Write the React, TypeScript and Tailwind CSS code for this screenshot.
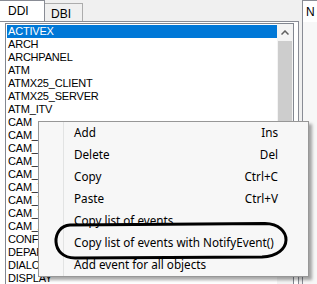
import React from 'react';

const items = [
  'ACTIVEX', 'ARCH', 'ARCHPANEL', 'ATM', 'ATMX25_CLIENT', 'ATMX25_SERVER', 'ATM_ITV', 'CAM',
  'CAM_DOME', 'CAM_DVR', 'CAM_IP', 'CAM_PTZ', 'CAM_TELEMETRY', 'CAM_VIDEO', 'CAM_VMD', 'CAM_ZONE',
  'CONFIG', 'DEPARTMENT', 'DIALOG', 'DISPLAY', 'DOOR',
];

const menu = [
  { label: 'Add', key: 'Ins' },
  { label: 'Delete', key: 'Del' },
  { label: 'Copy', key: 'Ctrl+C' },
  { label: 'Paste', key: 'Ctrl+V' },
  { label: 'Copy list of events', key: '' },
  { label: 'Copy list of events with NotifyEvent()', key: '' },
  { label: 'Add event for all objects', key: '' },
];

const App = () => {
  return (
    <div className="relative w-[317px] h-[284px] overflow-hidden bg-[#f0f0f0] flex font-['Liberation_Sans',Arial,sans-serif] text-black">
      {/* left tab control */}
      <div className="w-[299px] flex flex-col shrink-0">
        <div className="h-[22px] flex items-end">
          <div className="h-[22px] w-[45px] bg-white border-t border-r border-[#898c95] pl-[8px] pt-[3px] text-[12px] leading-[14px]">DDI</div>
          <div className="h-[19px] w-[38px] bg-[#f0f0f0] border-t border-r border-[#acacac] pl-[6px] pt-[3px] text-[12px] leading-[14px]">DBI</div>
        </div>
        <div className="flex-1 bg-white border-r border-[#898c95] pl-[5px] pt-[1px] border-t border-t-[#898c95] -mt-px">
          <div className="w-[289px] h-[270px] border border-[#828790] flex">
            <div className="flex-1 flex flex-col pt-px pl-px">
              {items.map((it, i) => (
                <div
                  key={it}
                  className={
                    'h-[13px] leading-[13px] pl-[1px] text-[11px] tracking-[-0.2px] whitespace-nowrap ' +
                    (i === 0 ? 'bg-[#0078d7] text-white' : '')
                  }
                >
                  {it}
                </div>
              ))}
            </div>
            <div className="w-[16px] bg-[#f4f4f4] flex flex-col">
              <div className="h-[17px] flex items-center justify-center">
                <svg width="8" height="5" viewBox="0 0 8 5">
                  <path d="M0.5 4.5 L4 1 L7.5 4.5" fill="none" stroke="#606060" strokeWidth="1.5" />
                </svg>
              </div>
              <div className="mx-px h-[110px] bg-[#cdcdcd]" />
            </div>
          </div>
        </div>
      </div>

      {/* right tab control, mostly off screen */}
      <div className="ml-[3px] flex-1 flex flex-col">
        <div className="h-[22px] bg-white border-l border-t border-[#898c95] pl-[3px] pt-[4px] text-[12px] leading-[14px]">N</div>
        <div className="flex-1 bg-[#f7f7f7] border-l border-[#898c95]" />
      </div>

      {/* context menu */}
      <div className="absolute left-[38px] top-[121px] w-[271px] bg-[#f7f7f7] border border-[#979797] shadow-[3px_3px_3px_rgba(0,0,0,0.35)] font-['Noto_Sans',sans-serif]">
        <div className="absolute left-[24px] top-0 bottom-0 w-px bg-[#e2e3e3]" />
        {menu.map((m) => (
          <div key={m.label} className="h-[22px] flex items-center pl-[35px] pr-[30px] text-[11.7px] whitespace-nowrap">
            <span className="flex-1">{m.label}</span>
            <span>{m.key}</span>
          </div>
        ))}
      </div>

      {/* hand-drawn highlight */}
      <svg className="absolute left-0 top-0 pointer-events-none" width="317" height="284" viewBox="0 0 317 284">
        <path
          d="M70 225 L265 223.5 C293 224 294 256 262 257 L75 258 C50 258 51 226 70 225 Z"
          fill="none"
          stroke="#000"
          strokeWidth="3"
        />
      </svg>
    </div>
  );
};

export default App;
